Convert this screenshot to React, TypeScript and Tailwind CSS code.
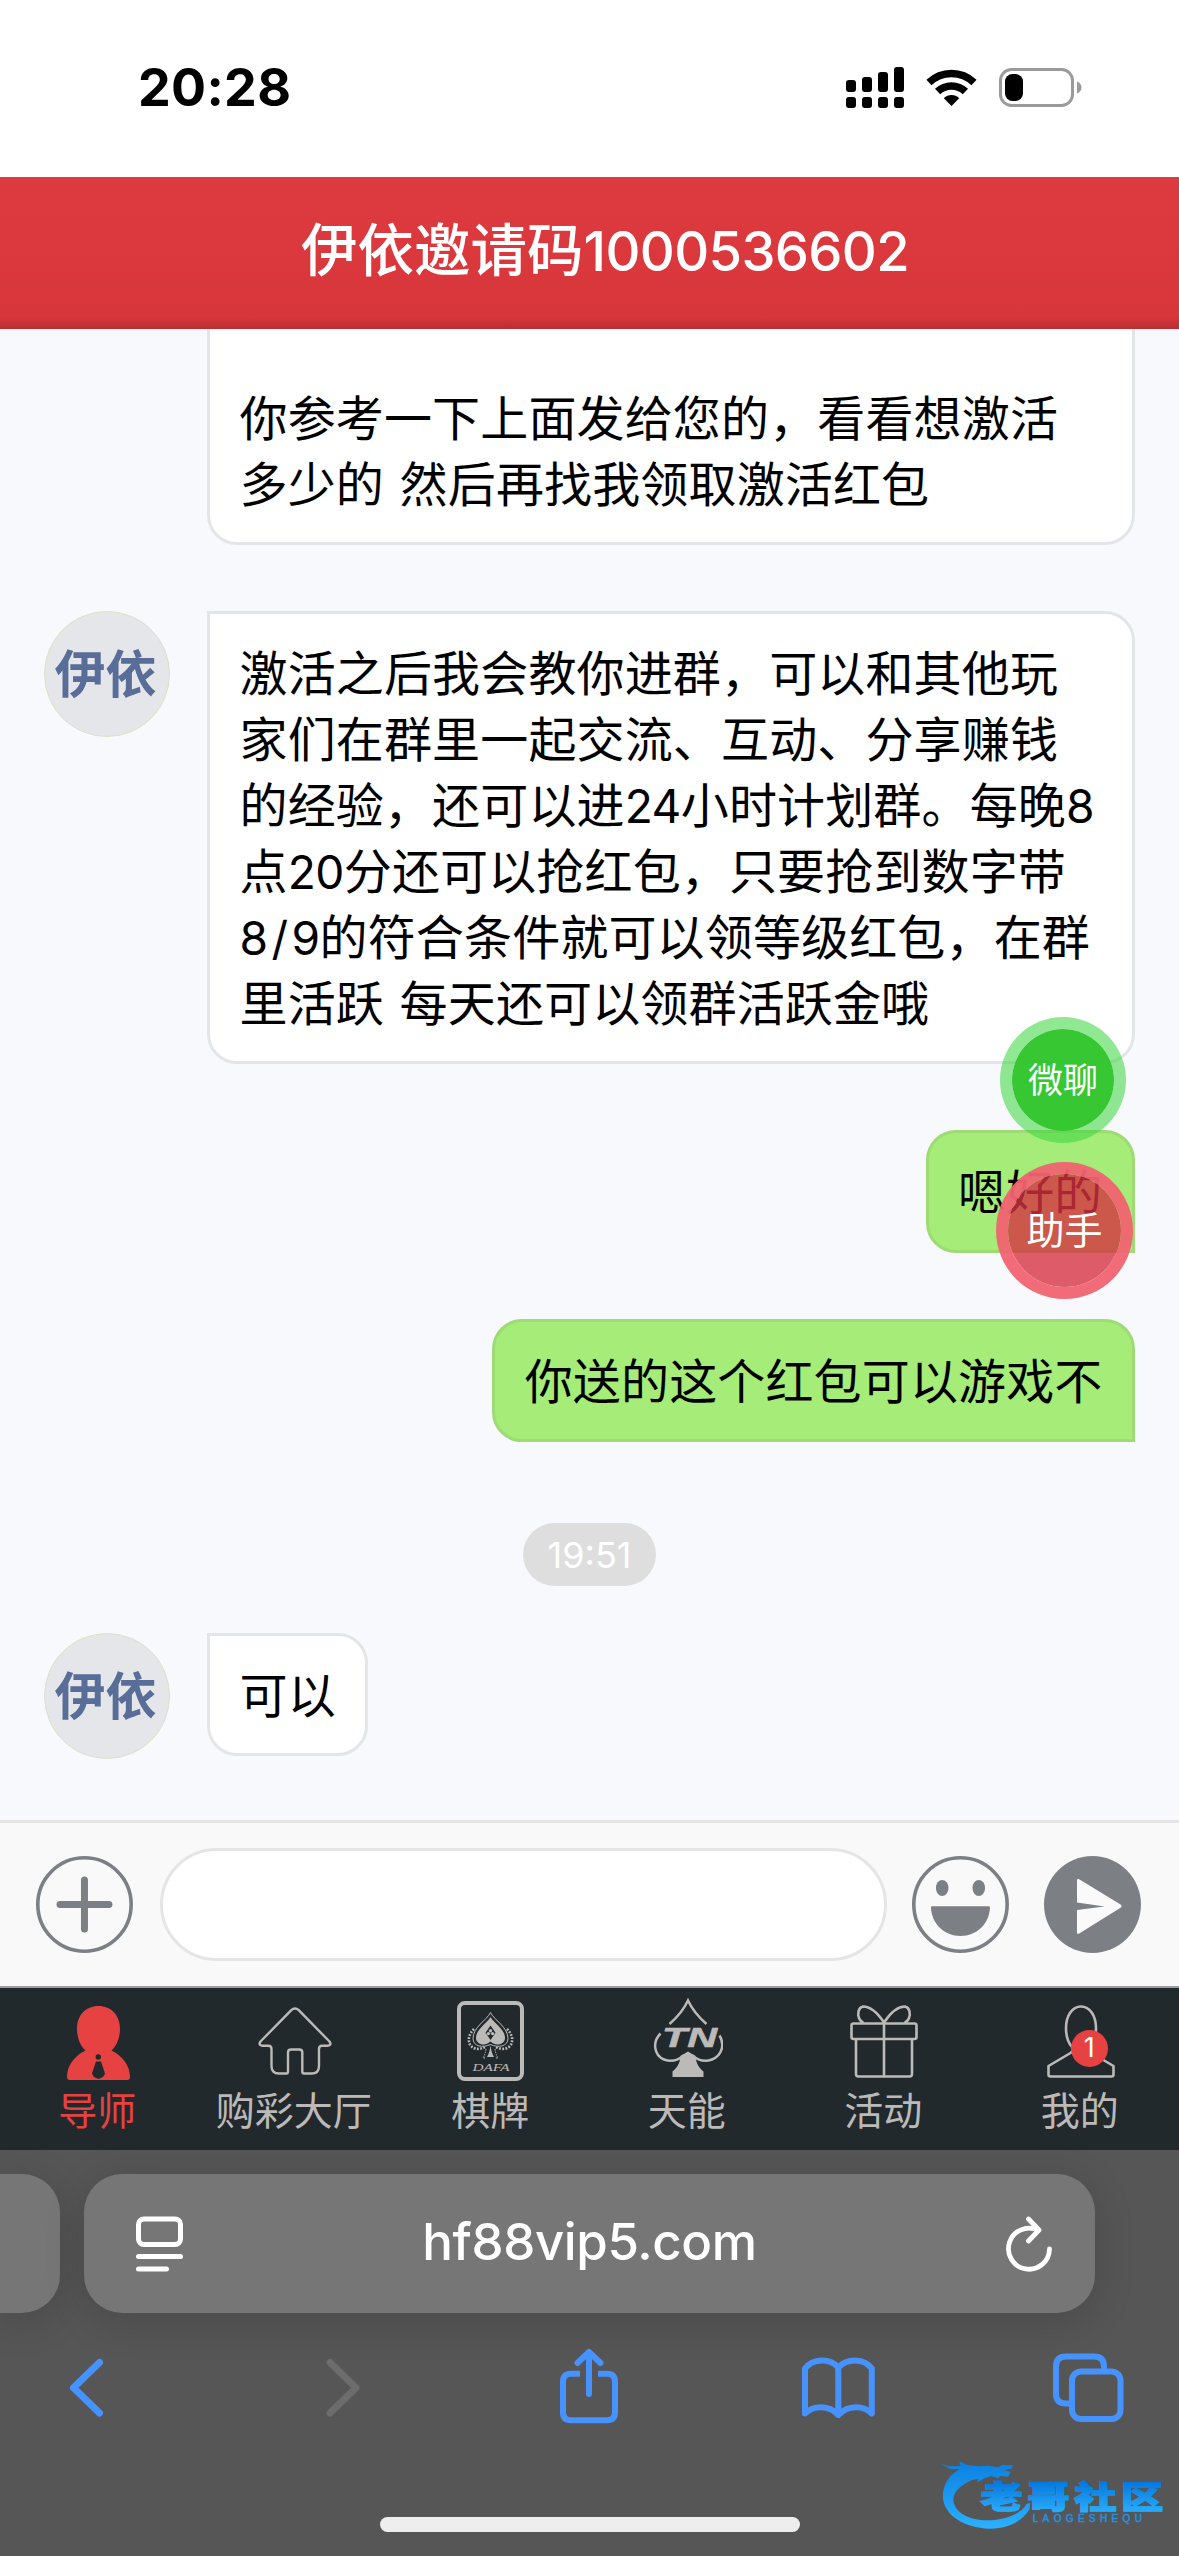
import type { ReactNode } from "react";
import clsx from "clsx";

const Num = ({ children }: { children: ReactNode }) => (
  <span className="text-[0.96em] tracking-[-0.012em]">{children}</span>
);

const Avatar = () => (
  <div className="flex h-[126px] w-[126px] shrink-0 items-center justify-center rounded-full border border-[#dbe3c4] bg-[#e4e6ea] pt-[2px] pr-[3px] text-[51px] font-bold text-[#596d99]">
    伊依
  </div>
);

const Bubble = ({
  lines,
  className,
}: {
  lines: ReactNode[];
  className: string;
}) => (
  <div
    className={clsx(
      "border-[3px] px-[29.5px] pt-[26.5px] pb-[24.5px] text-[48px] leading-[66px] tracking-[0.15px] whitespace-nowrap text-black [word-spacing:2px]",
      className
    )}
  >
    {lines.map((line, i) => (
      <div key={i} className="h-[66px]">
        {line}
      </div>
    ))}
  </div>
);

const incoming = "rounded-[30px] rounded-tl-none border-[#e4e5e9] bg-white";
const outgoing = "rounded-[30px] rounded-br-none border-[#9edb74] bg-[#a5ec78]";

const StatusBar = () => (
  <div className="flex h-[177px] shrink-0 justify-between bg-white pr-[95px] pl-[138px] text-black">
    <div className="pt-[57px] text-[52px] leading-[62px] font-bold tracking-[0.3px]">
      20:28
    </div>
    <svg width="240" height="45" viewBox="844 65 240 45" className="mt-[65px]">
      <rect x="846" y="80" width="10" height="12" rx="3" />
      <rect x="862" y="77" width="10" height="15" rx="3" />
      <rect x="878" y="72" width="10" height="20" rx="3" />
      <rect x="894" y="67" width="10" height="25" rx="3" />
      <rect x="846" y="97" width="10" height="11" rx="3" />
      <rect x="862" y="97" width="10" height="11" rx="3" />
      <rect x="878" y="97" width="10" height="11" rx="3" />
      <rect x="894" y="97" width="10" height="11" rx="3" />
      <g fill="none" stroke="#000" strokeWidth="7.5">
        <path d="M929 82.500A32.500 32.500 0 0 1 974 82.500" />
        <path d="M937.600 91.500A20 20 0 0 1 965.400 91.500" />
      </g>
      <path d="M951.500 106L943.800 98.200A11 11 0 0 1 959.200 98.200Z" />
      <rect x="1000.500" y="69.500" width="72" height="36" rx="11" fill="none" stroke="#9a9a9a" strokeWidth="3" />
      <rect x="1005" y="74" width="18" height="27" rx="7.5" />
      <path d="M1077 81.500q4.500 1.800 4.500 6t-4.500 6z" fill="#9a9a9a" />
    </svg>
  </div>
);

const InputBar = () => (
  <div className="flex h-[166px] shrink-0 items-center border-t-[3px] border-[#e5e5e5] bg-[#f9f9f9] pr-[38px] pb-[1px] pl-[36px]">
    <svg width="97" height="97" viewBox="0 0 97 97" fill="none" stroke="#7c7f84">
      <circle cx="48.5" cy="48.5" r="46.7" strokeWidth="3.6" />
      <path d="M48.500 24v49M24 48.500h49" strokeWidth="7" strokeLinecap="round" />
    </svg>
    <div className="ml-[27px] h-[113px] w-[727px] rounded-full border-[3px] border-[#e5e5e5] bg-white" />
    <svg width="97" height="97" viewBox="0 0 97 97" fill="#7c7f84" className="ml-[25px]">
      <circle cx="48.5" cy="48.5" r="46.7" fill="none" stroke="#7c7f84" strokeWidth="3.6" />
      <ellipse cx="30.200" cy="32" rx="6.300" ry="8" />
      <ellipse cx="66.800" cy="32" rx="6.300" ry="8" />
      <path d="M20 50.300h57q1 0 1 1.200C77.500 67.500 65 80 48.500 80S19.500 67.500 19 51.500q0-1.200 1-1.200z" />
    </svg>
    <svg width="97" height="97" viewBox="0 0 97 97" className="ml-[35.500px]">
      <circle cx="48.5" cy="48.5" r="48.5" fill="#7c7f84" />
      <path d="M33 24.500q0-2.500 2.200-1.300L77 48.800q1.600 1.400 0 2.800L35.200 77.600q-2.200 1.200-2.200-1V54l27.500-3.600L33 46.500z" fill="#fafafa" />
    </svg>
  </div>
);

const TutorIcon = () => (
  <svg width="63" height="74" viewBox="0 0 63 74" fill="#e64242" className="mt-[3px]">
    <path d="M31.500 0C44 0 53 9 53 23c0 9-3.500 17-8.500 21.500C56 50 63 60 63 71q0 3-3 3H3q-3 0-3-3C0 60 7 50 18.500 44.500 13.500 40 10 32 10 23 10 9 19 0 31.500 0z" />
    <circle cx="31.300" cy="51" r="2.700" fill="#22292c" />
    <path d="M29 55.500h5l4 12q-1 4-6.500 5.500-5.500-1.500-6.500-5.500z" fill="#22292c" />
  </svg>
);

const HomeIcon = () => (
  <svg width="74" height="68" viewBox="0 0 74 68" fill="none" stroke="#bcbab9" strokeWidth="2.400" strokeLinejoin="round">
    <path d="M33.300 3.200q3.700-3.200 7.400 0L71.500 34.500q2.500 4-2 4.200H64q-3 0-3 3.300V59q0 7.500-7.500 7.500h-7.500q-1.700 0-1.700-2V45.500q0-3-3-3H33q-3 0-3 3v19q0 2-1.700 2H21q-7.500 0-7.500-7.500V42q0-3.300-3-3.300H4.500q-4.500-.2-2-4.200z" />
  </svg>
);

const CardIcon = () => (
  <svg width="68" height="80" viewBox="0 0 68 80" fill="#bcbab9">
    <rect x="2" y="2" width="63" height="76" rx="6" fill="none" stroke="#bcbab9" strokeWidth="4" />
    <path d="M33.500 16c3 6 14.500 12 14.500 21 0 6.500-9 9-14.500 3.500C28 46 19 43.500 19 37c0-9 11.500-15 14.500-21z" />
    <path d="M33.500 11.500C37 19 51 26 51 37.500c0 8-9.500 9.500-17.500 6-8 3.500-17.500 2-17.500-6C16 26 30 19 33.500 11.500z" fill="none" stroke="#bcbab9" strokeWidth="1" />
    <path d="M50 28c5 5 6 10 4.500 14.500S46 50 39 46M17 28c-5 5-6 10-4.500 14.500S21 50 28 46" fill="none" stroke="#bcbab9" strokeWidth="2.600" strokeDasharray="1.800 1.400" />
    <path d="M33.500 24.500l5 7.200-5 7.200-5-7.200z" fill="#22292c" />
    <circle cx="33.500" cy="29.700" r="1.700" />
    <circle cx="31.400" cy="32.600" r="1.700" />
    <circle cx="35.600" cy="32.600" r="1.700" />
    <path d="M33.500 44c.6 5 1.300 8 3.500 12h-7c2.200-4 2.900-7 3.500-12z" />
    <path d="M29 48q-.5 5-3 9h3M38 48q.5 5 3 9h-3" fill="none" stroke="#bcbab9" strokeWidth="1" strokeDasharray="1.500 1" />
    <text x="34" y="70" textAnchor="middle" textLength="37" lengthAdjust="spacingAndGlyphs" fontFamily="Liberation Serif, serif" fontStyle="italic" fontSize="11">
      DAFA
    </text>
  </svg>
);

const TnIcon = () => (
  <svg width="70" height="80" viewBox="0 0 70 80" fill="none" stroke="#bcbab9" strokeWidth="2.500" className="mb-[7px]">
    <path d="M16.500 26C24 19.500 31 11 35 2.500 39 11 46 19.500 53.500 26" />
    <path d="M7.500 35.500C-1 44 1 57.500 11 61.500c7 2.700 13 1.500 19-3.500l5-3 5 3c6 5 12 6.200 19 3.500 10-4 13-15 7.500-24" />
    <path d="M35 55.500q5 0 7.500 2.500c.5 8 4 12 8 15.500v5.500h-31v-5.500c4-3.500 7.500-7.500 8-15.500q2.500-2.500 7.500-2.500z" fill="#bcbab9" stroke="none" />
    <text x="9" y="48.500" textLength="55" lengthAdjust="spacingAndGlyphs" fill="#bcbab9" stroke="#bcbab9" strokeWidth="0.600" fontFamily="Liberation Sans, sans-serif" fontStyle="italic" fontWeight="700" fontSize="28">
      TN
    </text>
  </svg>
);

const GiftIcon = () => (
  <svg width="68" height="73" viewBox="0 0 68 73" fill="none" stroke="#bcbab9" strokeWidth="2.600" strokeLinejoin="round">
    <path d="M34 17.500C27 7 20 1.500 13 1.500c-5 1-5.500 8-4 11.500.8 2 2.500 4 4.500 4.500M34 17.500C41 7 48 1.500 55 1.500c5 1 5.500 8 4 11.500-.8 2-2.500 4-4.500 4.500" />
    <rect x="1.500" y="18.500" width="65" height="15.500" rx="2" />
    <path d="M6 34v35q0 2.500 2.500 2.500h51q2.500 0 2.500-2.500V34M34 18v53" />
  </svg>
);

const MeIcon = () => (
  <svg width="68" height="73" viewBox="0 0 68 73" fill="none" stroke="#bcbab9" strokeWidth="2.600" strokeLinejoin="round">
    <path d="M34 1.500C25 1.500 19 11 19 23c0 9 2 14.500 6 19q2 3-1.500 6L1.500 61v8.500q0 2 2 2h61q2 0 2-2V61l-22-13q-3.500-3-1.500-6c4-4.500 6-10 6-19 0-12-6-21.500-15-21.500z" />
  </svg>
);

const tabs = [
  { label: "导师", icon: <TutorIcon />, active: true },
  { label: "购彩大厅", icon: <HomeIcon /> },
  { label: "棋牌", icon: <CardIcon /> },
  { label: "天能", icon: <TnIcon /> },
  { label: "活动", icon: <GiftIcon /> },
  { label: "我的", icon: <MeIcon />, badge: 1 },
];

const TabBar = () => (
  <div className="grid h-[164px] shrink-0 grid-cols-6 border-t-2 border-[#9c9fa0] bg-[#22292c]">
    {tabs.map((tab) => (
      <div key={tab.label} className="flex flex-col items-center">
        <div className="relative mt-[8px] flex h-[90px] items-center justify-center">
          {tab.icon}
          {tab.badge && (
            <span className="absolute top-[34px] left-[24px] flex h-[37px] w-[37px] items-center justify-center rounded-full bg-[#e64242] text-[27px] text-white">
              {tab.badge}
            </span>
          )}
        </div>
        <span
          className={clsx(
            "pr-[2px] text-[39px] leading-[50px]",
            tab.active ? "text-[#e64242]" : "text-[#bcbab9]"
          )}
        >
          {tab.label}
        </span>
      </div>
    ))}
  </div>
);

const Watermark = () => (
  <svg width="225" height="76" viewBox="120 43 675 228" className="absolute top-[2454px] left-[940px]">
    <defs>
      <linearGradient id="ring" x1="0" y1="60" x2="0" y2="265" gradientUnits="userSpaceOnUse">
        <stop offset="0" stopColor="#0a7fe0" />
        <stop offset="1" stopColor="#2bb0ff" />
      </linearGradient>
      <linearGradient id="word" x1="0" y1="0" x2="0" y2="1">
        <stop offset="0.2" stopColor="#0478e0" />
        <stop offset="0.9" stopColor="#2baefa" />
      </linearGradient>
    </defs>
    <g fill="url(#ring)">
      <path d="M122 71l24 9 36-1-4-14 24 11 34 4 30-2 28 5 14-8 32 2-6 10-24 4 22 6-8 14-24-3-4 8-22-7-24 8-20 12 6-12-20 4C176 140 160 158 160 182c4 38 48 60 102 60 56 0 104-22 118-50l10-2-1 18c-20 34-62 60-120 59-76-2-136-40-140-92-2-38 18-70 50-86l-30-2z" />
    </g>
    <g fontFamily="Noto Sans CJK SC, sans-serif" fontWeight="900">
      <text transform="translate(242 205) scale(1 0.72)" fontSize="126" textLength="548" lengthAdjust="spacing" fill="url(#word)" stroke="url(#word)" strokeWidth="6">
        老哥社区
      </text>
    </g>
    <text x="398" y="247" fontFamily="Liberation Sans, sans-serif" fontSize="30" textLength="328" lengthAdjust="spacing" fill="#2391e2" stroke="#2391e2" strokeWidth="1.500">
      LAOGESHEQU
    </text>
  </svg>
);

const BrowserBar = () => (
  <div className="flex flex-1 flex-col bg-[#565656]">
    <div className="mt-[24px] flex h-[139px] gap-[24px]">
      <div className="h-full w-[60px] rounded-r-[38px] bg-[#767676] shadow-[0_8px_40px_rgba(0,0,0,0.15)]" />
      <div className="flex h-full w-[1011px] items-center justify-between rounded-[38px] bg-[#767676] pr-[42px] pl-[52px] shadow-[0_8px_40px_rgba(0,0,0,0.15)]">
        <svg width="47" height="56" viewBox="0 0 47 56" fill="none" stroke="#fff" strokeWidth="5" strokeLinecap="round">
          <rect x="2.500" y="3" width="42" height="25.500" rx="5.500" />
          <path d="M2.500 40.500h42M2.500 53h28" />
        </svg>
        <span className="mr-[10px] pb-[2px] text-[51px] font-medium tracking-[-0.4px] text-white">
          hf88vip5.com
        </span>
        <svg width="47" height="56" viewBox="0 0 47 56" fill="none" stroke="#fff" strokeWidth="4.800" strokeLinecap="round" strokeLinejoin="round">
          <path d="M43.500 33A20.500 20.500 0 1 1 32 14.300" />
          <path d="M22.500 3L33 14 22.500 25" />
        </svg>
      </div>
    </div>
    <div className="mt-[28px] h-[96px]">
      <svg width="1179" height="96" viewBox="0 2341 1179 96" fill="none" stroke="#4693ff" strokeWidth="6" strokeLinecap="round" strokeLinejoin="round">
        <path d="M99.500 2362.500L73.500 2387.700 99.500 2413" strokeWidth="7" />
        <path d="M330 2362.500L356 2387.700 330 2413" strokeWidth="7" stroke="#6c6c6c" />
        <path d="M580 2373.700h-9q-8 0-8 8v30.500q0 8 8 8h36q8 0 8-8v-30.500q0-8-8-8h-9" strokeLinecap="butt" />
        <path d="M589 2394v-41.500M577.500 2363L589 2352l11.500 11" />
        <path d="M838.300 2367.500C830 2358 813 2358 805 2368.500V2413.500C814 2405 829 2405 838.300 2415 848 2405 863 2405 871.800 2413.500V2368.500C864 2358 847 2358 838.300 2367.500V2415" />
        <path d="M1069 2403.500h-3q-10 0-10-10v-27q0-10 10-10h28q10 0 10 10v3" strokeLinecap="butt" />
        <rect x="1072" y="2371.500" width="48.500" height="47.500" rx="9" />
      </svg>
    </div>
    <div className="mx-auto mt-[80px] h-[15px] w-[420px] rounded-full bg-[#eee]" />
  </div>
);

export default function App() {
  return (
    <div className="relative flex h-[2556px] w-[1179px] flex-col overflow-hidden bg-white font-[Inter,'Noto_Sans_CJK_SC',sans-serif]">
      <StatusBar />
      <header className="flex h-[152px] shrink-0 items-center justify-center bg-[linear-gradient(to_bottom,#de3b40_0%,#d7363b_92%,#b92e33_100%)] pb-[3px] pl-[31px] text-[56.5px] font-medium text-white">
        <span className="whitespace-nowrap">
          伊依邀请码<Num>1000536602</Num>
        </span>
      </header>

      <main className="flex h-[1491px] shrink-0 flex-col overflow-hidden bg-[#f8f9fc] pr-[44px] pl-[44px]">
        <div className="flex h-[216px] shrink-0 flex-col justify-end overflow-hidden pl-[163px]">
          <Bubble
            className={incoming}
            lines={[
              "",
              "你参考一下上面发给您的，看看想激活",
              "多少的 然后再找我领取激活红包",
            ]}
          />
        </div>
        <div className="mt-[66px] flex shrink-0 items-start gap-[37px]">
          <Avatar />
          <Bubble
            className={`${incoming} w-[928px]`}
            lines={[
              "激活之后我会教你进群，可以和其他玩",
              "家们在群里一起交流、互动、分享赚钱",
              <>
                的经验，还可以进<Num>24</Num>小时计划群。每晚<Num>8</Num>
              </>,
              <>
                点<Num>20</Num>分还可以抢红包，只要抢到数字带
              </>,
              <>
                <Num>
                  8<span className="mx-[4px]">/</span>9
                </Num>
                的符合条件就可以领等级红包，在群
              </>,
              "里活跃 每天还可以领群活跃金哦",
            ]}
          />
        </div>
        <div className="mt-[66px] flex shrink-0 flex-col items-end gap-[66px]">
          <Bubble className={outgoing} lines={["嗯好的"]} />
          <Bubble className={outgoing} lines={["你送的这个红包可以游戏不"]} />
        </div>
        <div className="mx-auto mt-[81px] flex h-[63px] w-[133px] shrink-0 items-center justify-center rounded-full bg-[#dedede] text-[36px] text-white">
          19:51
        </div>
        <div className="mt-[47px] flex shrink-0 items-start gap-[37px]">
          <Avatar />
          <Bubble className={incoming} lines={["可以"]} />
        </div>
      </main>

      <InputBar />
      <TabBar />
      <BrowserBar />

      {/* floating shortcuts over the chat */}
      <button className="absolute top-[1017px] left-[1000px] flex h-[126px] w-[126px] items-center justify-center rounded-full border-[12px] border-[#3ad63e]/56 bg-[#2cc428]/95 bg-clip-padding text-[35px] text-white">
        微聊
      </button>
      <button className="absolute top-[1162px] left-[996px] flex h-[137px] w-[137px] items-center justify-center rounded-full border-[12px] border-[#f06371]/95 bg-[#d73041]/79 bg-clip-padding text-[38px] text-white">
        助手
      </button>
      <Watermark />
    </div>
  );
}
